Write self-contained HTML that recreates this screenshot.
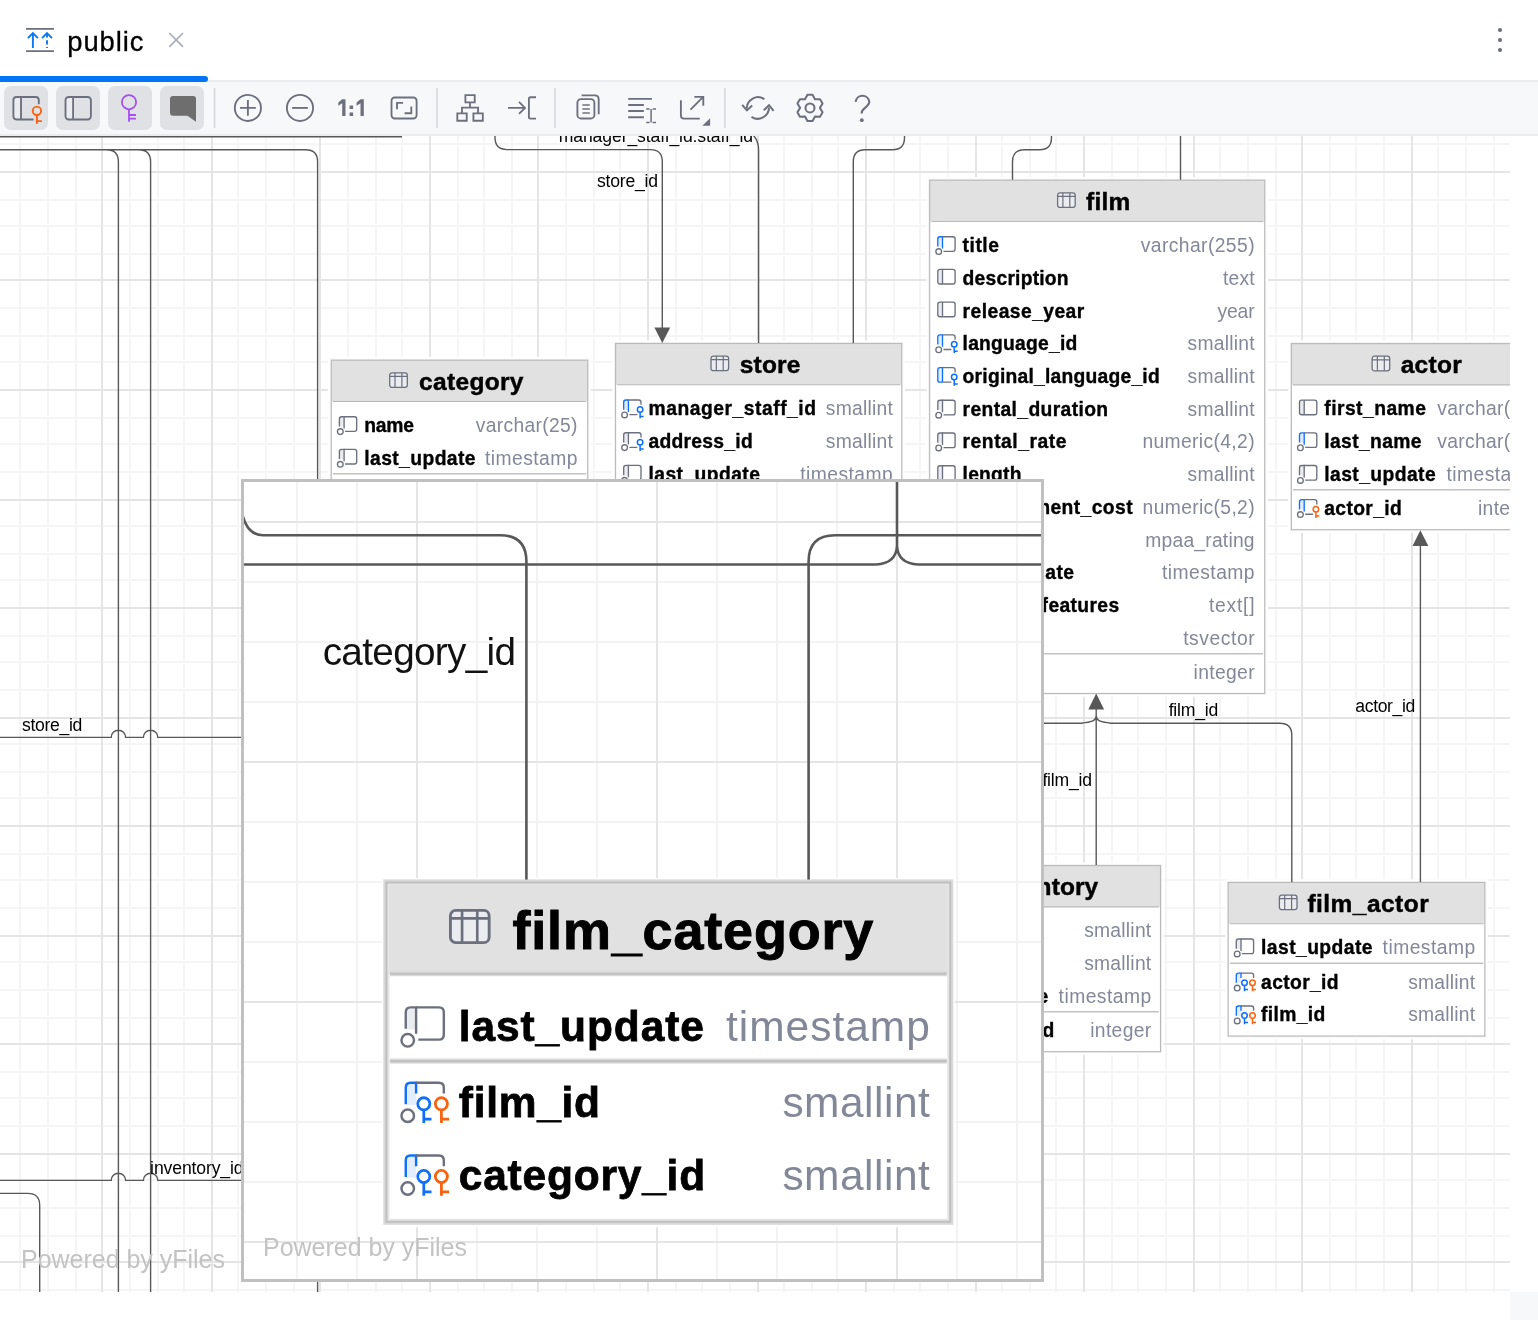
<!DOCTYPE html><html><head><meta charset="utf-8"><title>public</title>
<style>html,body{margin:0;padding:0;background:#fff}body{width:1538px;height:1320px;overflow:hidden;position:relative}svg{position:absolute;left:0;top:0;will-change:transform;font-family:"Liberation Sans",sans-serif}text{white-space:pre}</style></head><body>
<svg width="1538" height="1320" viewBox="0 0 1538 1320">
<defs><clipPath id="cv"><rect x="0" y="136" width="1510" height="1156"/></clipPath><clipPath id="mg"><rect x="244" y="482" width="797" height="797"/></clipPath></defs>
<rect width="1538" height="1320" fill="#fff"/>
<g clip-path="url(#cv)"><path d="M20 136V1292M48 136V1292M76 136V1292M130 136V1292M158 136V1292M184 136V1292M238 136V1292M266 136V1292M294 136V1292M348 136V1292M376 136V1292M402 136V1292M458 136V1292M484 136V1292M512 136V1292M566 136V1292M594 136V1292M620 136V1292M676 136V1292M702 136V1292M730 136V1292M784 136V1292M812 136V1292M838 136V1292M894 136V1292M920 136V1292M948 136V1292M1002 136V1292M1030 136V1292M1056 136V1292M1112 136V1292M1138 136V1292M1166 136V1292M1220 136V1292M1248 136V1292M1276 136V1292M1330 136V1292M1356 136V1292M1384 136V1292M1438 136V1292M1466 136V1292M1494 136V1292M0 144H1510M0 200H1510M0 226H1510M0 254H1510M0 308H1510M0 336H1510M0 362H1510M0 418H1510M0 444H1510M0 472H1510M0 526H1510M0 554H1510M0 580H1510M0 636H1510M0 662H1510M0 690H1510M0 744H1510M0 772H1510M0 798H1510M0 854H1510M0 880H1510M0 908H1510M0 962H1510M0 990H1510M0 1018H1510M0 1072H1510M0 1098H1510M0 1126H1510M0 1180H1510M0 1208H1510M0 1236H1510M0 1290H1510" stroke="#f5f5f5" stroke-width="2" fill="none" shape-rendering="crispEdges"/><path d="M102 136V1292M212 136V1292M320 136V1292M430 136V1292M538 136V1292M648 136V1292M758 136V1292M866 136V1292M976 136V1292M1084 136V1292M1194 136V1292M1302 136V1292M1412 136V1292M0 172H1510M0 280H1510M0 390H1510M0 500H1510M0 608H1510M0 718H1510M0 826H1510M0 936H1510M0 1044H1510M0 1154H1510M0 1262H1510" stroke="#e5e5e5" stroke-width="2" fill="none" shape-rendering="crispEdges"/><rect x="328.10" y="357.00" width="262.80" height="159.72" fill="#fff"/><rect x="612.40" y="340.30" width="292.50" height="192.44" fill="#fff"/><rect x="926.50" y="177.00" width="341.40" height="519.64" fill="#fff"/><rect x="1288.20" y="340.40" width="264.00" height="192.44" fill="#fff"/><rect x="1225.00" y="879.30" width="263.00" height="159.90" fill="#fff"/><rect x="900.80" y="862.40" width="262.90" height="192.44" fill="#fff"/><path d="M0 136.7H402M0 149.7H106.4Q118.4 149.7 118.4 161.7V1292M0 149.7H138.6Q150.6 149.7 150.6 161.7V1292M0 149.7H305.6Q317.6 149.7 317.6 161.7V1292M495 130V137.6Q495 149.6 507 149.6H650.3Q662.3 149.6 662.3 161.6V330M746 130Q758.6 136 758.6 150V344M904.5 130V137.7Q904.5 149.7 892.5 149.7H865.3Q853.3 149.7 853.3 161.7V344M1051.5 130V137.7Q1051.5 149.7 1039.5 149.7H1024.5Q1012.5 149.7 1012.5 161.7V181M1180.5 130V181M0 737.4H111.2A7.2 7.2 0 0 1 125.60000000000001 737.4H143.4A7.2 7.2 0 0 1 157.79999999999998 737.4H242M0 1180.4H111.2A7.2 7.2 0 0 1 125.60000000000001 1180.4H143.4A7.2 7.2 0 0 1 157.79999999999998 1180.4H242M0 1193.4H27.700000000000003Q39.7 1193.4 39.7 1205.4V1292M1096.2 708V866M1040 723.3H1082C1091 721.5 1096.2 721.4 1096.2 715.4M1096.2 715.4C1096.2 721.4 1101.4 721.5 1110.4 723.3H1279.8Q1291.8 723.3 1291.8 735.3V883M1420.4 545V883" stroke="#585858" stroke-width="1.4" fill="none"/><path d="M662.3 343L654.4 327.5H670.2Z" fill="#585858"/><path d="M1096.2 693.6L1088.3 709.4H1104.1Z" fill="#585858"/><path d="M1420.4 530.2L1412.5 546H1428.3Z" fill="#585858"/><text x="558.70" y="141.90" font-size="17.6" textLength="194.30">manager_staff_id:staff_id</text><text x="597.00" y="187.40" font-size="17.6" textLength="61.00">store_id</text><text x="22.00" y="730.70" font-size="17.6" textLength="60.30">store_id</text><text x="150.10" y="1173.60" font-size="17.6" textLength="93.50">inventory_id</text><text x="1168.70" y="716.30" font-size="17.6" textLength="49.60">film_id</text><text x="1355.30" y="712.00" font-size="17.6" textLength="60.10">actor_id</text><text x="1042.40" y="785.70" font-size="17.6" textLength="49.60">film_id</text><text x="21.00" y="1267.80" font-size="25" fill="#c3c3c3" textLength="203.90">Powered by yFiles</text><g transform="translate(331.30,360.20) scale(1)"><rect x="0" y="0" width="256.4" height="153.32" fill="#fff"/><rect x="0" y="0" width="256.4" height="41.3" fill="#e1e1e1"/><path d="M1.6 41.3H254.79999999999998" stroke="#b9b9b9" stroke-width="1.1"/><path d="M1.6 113.52H254.79999999999998" stroke="#c2c2c2" stroke-width="1.5"/><rect x="0" y="0" width="256.4" height="153.32" fill="none" stroke="#b9b9b9" stroke-width="1.1"/><rect x="-1" y="-1" width="258.4" height="155.32" fill="none" stroke="#000" stroke-opacity="0.05" stroke-width="1"/><g transform="translate(58.40,12.6)"><rect x="0" y="0" width="17.6" height="14.6" rx="2.4" fill="#ebecf0" stroke="#6c707e" stroke-width="1.3"/><path d="M0 3.6H17.6M5.3 0V14.6M12.2 0V14.6" stroke="#6c707e" stroke-width="1.2" fill="none"/></g><text x="87.80" y="29.90" font-size="24.5" font-weight="700" stroke="#000" stroke-width="0.44" textLength="104.30">category</text><g transform="translate(8.1,56.50)"><rect x="0.6" y="0.6" width="4.10" height="9.40" fill="#ebecf0"/><path d="M0 9.7V2.2Q0 0 2.2 0H4.7V11.899999999999999" stroke="#6c707e" stroke-width="1.35" fill="none"/><path d="M4.7 0H15.100000000000001Q17.3 0 17.3 2.2V12.399999999999999Q17.3 14.6 15.100000000000001 14.6H5.7" stroke="#6c707e" stroke-width="1.35" fill="none"/><circle cx="0.9" cy="14.9" r="2.85" fill="#fff" stroke="#6c707e" stroke-width="1.35"/></g><text x="32.90" y="71.90" font-size="19.3" font-weight="700" stroke="#000" stroke-width="0.35" textLength="49.70">name</text><text x="144.40" y="71.90" font-size="19.3" fill="#838899" textLength="101.80">varchar(25)</text><g transform="translate(8.1,89.22)"><rect x="0.6" y="0.6" width="4.10" height="9.40" fill="#ebecf0"/><path d="M0 9.7V2.2Q0 0 2.2 0H4.7V11.899999999999999" stroke="#6c707e" stroke-width="1.35" fill="none"/><path d="M4.7 0H15.100000000000001Q17.3 0 17.3 2.2V12.399999999999999Q17.3 14.6 15.100000000000001 14.6H5.7" stroke="#6c707e" stroke-width="1.35" fill="none"/><circle cx="0.9" cy="14.9" r="2.85" fill="#fff" stroke="#6c707e" stroke-width="1.35"/></g><text x="32.90" y="104.62" font-size="19.3" font-weight="700" stroke="#000" stroke-width="0.35" textLength="111.40">last_update</text><text x="153.60" y="104.62" font-size="19.3" fill="#838899" textLength="92.60">timestamp</text><g transform="translate(8.1,123.37)"><rect x="0.6" y="0.6" width="4.10" height="9.40" fill="#e3edfd"/><path d="M0 9.7V2.2Q0 0 2.2 0H4.7V11.899999999999999" stroke="#0f6ffc" stroke-width="1.35" fill="none"/><path d="M4.7 0H15.100000000000001Q17.3 0 17.3 2.2V4.8M5.7 14.6H13.6" stroke="#6c707e" stroke-width="1.35" fill="none"/><circle cx="0.9" cy="14.9" r="2.85" fill="#fff" stroke="#6c707e" stroke-width="1.35"/><circle cx="16.4" cy="9.5" r="2.75" fill="none" stroke="#f9620e" stroke-width="1.5"/><path d="M16.4 12.3V18.2M16.4 16.4H19.9" stroke="#f9620e" stroke-width="1.5" fill="none"/></g><text x="32.90" y="138.77" font-size="19.3" font-weight="700" stroke="#000" stroke-width="0.35" textLength="112.00">category_id</text><text x="185.20" y="138.77" font-size="19.3" fill="#838899" textLength="61.00">integer</text></g><g transform="translate(615.60,343.50) scale(1)"><rect x="0" y="0" width="286.1" height="186.04" fill="#fff"/><rect x="0" y="0" width="286.1" height="41.3" fill="#e1e1e1"/><path d="M1.6 41.3H284.5" stroke="#b9b9b9" stroke-width="1.1"/><path d="M1.6 146.24H284.5" stroke="#c2c2c2" stroke-width="1.5"/><rect x="0" y="0" width="286.1" height="186.04" fill="none" stroke="#b9b9b9" stroke-width="1.1"/><rect x="-1" y="-1" width="288.1" height="188.04" fill="none" stroke="#000" stroke-opacity="0.05" stroke-width="1"/><g transform="translate(95.40,12.6)"><rect x="0" y="0" width="17.6" height="14.6" rx="2.4" fill="#ebecf0" stroke="#6c707e" stroke-width="1.3"/><path d="M0 3.6H17.6M5.3 0V14.6M12.2 0V14.6" stroke="#6c707e" stroke-width="1.2" fill="none"/></g><text x="124.20" y="29.90" font-size="24.5" font-weight="700" stroke="#000" stroke-width="0.44" textLength="60.60">store</text><g transform="translate(8.1,56.50)"><rect x="0.6" y="0.6" width="4.10" height="9.40" fill="#e3edfd"/><path d="M0 9.7V2.2Q0 0 2.2 0H4.7V11.899999999999999" stroke="#0f6ffc" stroke-width="1.35" fill="none"/><path d="M4.7 0H15.100000000000001Q17.3 0 17.3 2.2V4.8M5.7 14.6H13.6" stroke="#6c707e" stroke-width="1.35" fill="none"/><circle cx="0.9" cy="14.9" r="2.85" fill="#fff" stroke="#6c707e" stroke-width="1.35"/><circle cx="16.4" cy="9.5" r="2.75" fill="none" stroke="#0f6ffc" stroke-width="1.5"/><path d="M16.4 12.3V18.2M16.4 16.4H19.9" stroke="#0f6ffc" stroke-width="1.5" fill="none"/></g><text x="32.90" y="71.90" font-size="19.3" font-weight="700" stroke="#000" stroke-width="0.35" textLength="167.50">manager_staff_id</text><text x="210.20" y="71.90" font-size="19.3" fill="#838899" textLength="67.00">smallint</text><g transform="translate(8.1,89.22)"><rect x="0.6" y="0.6" width="4.10" height="9.40" fill="#ebecf0"/><path d="M0 9.7V2.2Q0 0 2.2 0H4.7V11.899999999999999" stroke="#6c707e" stroke-width="1.35" fill="none"/><path d="M4.7 0H15.100000000000001Q17.3 0 17.3 2.2V4.8M5.7 14.6H13.6" stroke="#6c707e" stroke-width="1.35" fill="none"/><circle cx="0.9" cy="14.9" r="2.85" fill="#fff" stroke="#6c707e" stroke-width="1.35"/><circle cx="16.4" cy="9.5" r="2.75" fill="none" stroke="#0f6ffc" stroke-width="1.5"/><path d="M16.4 12.3V18.2M16.4 16.4H19.9" stroke="#0f6ffc" stroke-width="1.5" fill="none"/></g><text x="32.90" y="104.62" font-size="19.3" font-weight="700" stroke="#000" stroke-width="0.35" textLength="104.20">address_id</text><text x="210.20" y="104.62" font-size="19.3" fill="#838899" textLength="67.00">smallint</text><g transform="translate(8.1,121.94)"><rect x="0.6" y="0.6" width="4.10" height="9.40" fill="#ebecf0"/><path d="M0 9.7V2.2Q0 0 2.2 0H4.7V11.899999999999999" stroke="#6c707e" stroke-width="1.35" fill="none"/><path d="M4.7 0H15.100000000000001Q17.3 0 17.3 2.2V12.399999999999999Q17.3 14.6 15.100000000000001 14.6H5.7" stroke="#6c707e" stroke-width="1.35" fill="none"/><circle cx="0.9" cy="14.9" r="2.85" fill="#fff" stroke="#6c707e" stroke-width="1.35"/></g><text x="32.90" y="137.34" font-size="19.3" font-weight="700" stroke="#000" stroke-width="0.35" textLength="111.40">last_update</text><text x="184.60" y="137.34" font-size="19.3" fill="#838899" textLength="92.60">timestamp</text><g transform="translate(8.1,156.09)"><rect x="0.6" y="0.6" width="4.10" height="9.40" fill="#e3edfd"/><path d="M0 9.7V2.2Q0 0 2.2 0H4.7V11.899999999999999" stroke="#0f6ffc" stroke-width="1.35" fill="none"/><path d="M4.7 0H15.100000000000001Q17.3 0 17.3 2.2V4.8M5.7 14.6H13.6" stroke="#6c707e" stroke-width="1.35" fill="none"/><circle cx="0.9" cy="14.9" r="2.85" fill="#fff" stroke="#6c707e" stroke-width="1.35"/><circle cx="16.4" cy="9.5" r="2.75" fill="none" stroke="#f9620e" stroke-width="1.5"/><path d="M16.4 12.3V18.2M16.4 16.4H19.9" stroke="#f9620e" stroke-width="1.5" fill="none"/></g><text x="32.90" y="171.49" font-size="19.3" font-weight="700" stroke="#000" stroke-width="0.35" textLength="76.00">store_id</text><text x="216.20" y="171.49" font-size="19.3" fill="#838899" textLength="61.00">integer</text></g><g transform="translate(929.70,180.20) scale(1)"><rect x="0" y="0" width="335.0" height="513.24" fill="#fff"/><rect x="0" y="0" width="335.0" height="41.3" fill="#e1e1e1"/><path d="M1.6 41.3H333.4" stroke="#b9b9b9" stroke-width="1.1"/><path d="M1.6 473.44H333.4" stroke="#c2c2c2" stroke-width="1.5"/><rect x="0" y="0" width="335.0" height="513.24" fill="none" stroke="#b9b9b9" stroke-width="1.1"/><rect x="-1" y="-1" width="337.0" height="515.24" fill="none" stroke="#000" stroke-opacity="0.05" stroke-width="1"/><g transform="translate(127.90,12.6)"><rect x="0" y="0" width="17.6" height="14.6" rx="2.4" fill="#ebecf0" stroke="#6c707e" stroke-width="1.3"/><path d="M0 3.6H17.6M5.3 0V14.6M12.2 0V14.6" stroke="#6c707e" stroke-width="1.2" fill="none"/></g><text x="156.30" y="29.90" font-size="24.5" font-weight="700" stroke="#000" stroke-width="0.44" textLength="44.40">film</text><g transform="translate(8.1,56.50)"><rect x="0.6" y="0.6" width="4.10" height="9.40" fill="#e3edfd"/><path d="M0 9.7V2.2Q0 0 2.2 0H4.7V11.899999999999999" stroke="#0f6ffc" stroke-width="1.35" fill="none"/><path d="M4.7 0H15.100000000000001Q17.3 0 17.3 2.2V12.399999999999999Q17.3 14.6 15.100000000000001 14.6H5.7" stroke="#6c707e" stroke-width="1.35" fill="none"/><circle cx="0.9" cy="14.9" r="2.85" fill="#fff" stroke="#6c707e" stroke-width="1.35"/></g><text x="32.90" y="71.90" font-size="19.3" font-weight="700" stroke="#000" stroke-width="0.35" textLength="36.40">title</text><text x="211.00" y="71.90" font-size="19.3" fill="#838899" textLength="113.90">varchar(255)</text><g transform="translate(8.1,89.22)"><rect x="0.6" y="0.6" width="4.10" height="13.40" fill="#ebecf0"/><rect x="0" y="0" width="17.3" height="14.6" rx="2.2" fill="none" stroke="#6c707e" stroke-width="1.35"/><path d="M4.7 0V14.6" stroke="#6c707e" stroke-width="1.35" fill="none"/></g><text x="32.90" y="104.62" font-size="19.3" font-weight="700" stroke="#000" stroke-width="0.35" textLength="106.00">description</text><text x="293.40" y="104.62" font-size="19.3" fill="#838899" textLength="31.50">text</text><g transform="translate(8.1,121.94)"><rect x="0.6" y="0.6" width="4.10" height="13.40" fill="#ebecf0"/><rect x="0" y="0" width="17.3" height="14.6" rx="2.2" fill="none" stroke="#6c707e" stroke-width="1.35"/><path d="M4.7 0V14.6" stroke="#6c707e" stroke-width="1.35" fill="none"/></g><text x="32.90" y="137.34" font-size="19.3" font-weight="700" stroke="#000" stroke-width="0.35" textLength="121.70">release_year</text><text x="287.90" y="137.34" font-size="19.3" fill="#838899" textLength="37.00">year</text><g transform="translate(8.1,154.66)"><rect x="0.6" y="0.6" width="4.10" height="9.40" fill="#e3edfd"/><path d="M0 9.7V2.2Q0 0 2.2 0H4.7V11.899999999999999" stroke="#0f6ffc" stroke-width="1.35" fill="none"/><path d="M4.7 0H15.100000000000001Q17.3 0 17.3 2.2V4.8M5.7 14.6H13.6" stroke="#6c707e" stroke-width="1.35" fill="none"/><circle cx="0.9" cy="14.9" r="2.85" fill="#fff" stroke="#6c707e" stroke-width="1.35"/><circle cx="16.4" cy="9.5" r="2.75" fill="none" stroke="#0f6ffc" stroke-width="1.5"/><path d="M16.4 12.3V18.2M16.4 16.4H19.9" stroke="#0f6ffc" stroke-width="1.5" fill="none"/></g><text x="32.90" y="170.06" font-size="19.3" font-weight="700" stroke="#000" stroke-width="0.35" textLength="114.70">language_id</text><text x="257.90" y="170.06" font-size="19.3" fill="#838899" textLength="67.00">smallint</text><g transform="translate(8.1,187.38)"><rect x="0.6" y="0.6" width="4.10" height="13.40" fill="#e3edfd"/><path d="M4.7 14.6H2.2Q0 14.6 0 12.399999999999999V2.2Q0 0 2.2 0H4.7V14.6" stroke="#0f6ffc" stroke-width="1.35" fill="none"/><path d="M4.7 0H15.100000000000001Q17.3 0 17.3 2.2V4.8M4.7 14.6H13.6" stroke="#6c707e" stroke-width="1.35" fill="none"/><circle cx="16.4" cy="9.5" r="2.75" fill="none" stroke="#0f6ffc" stroke-width="1.5"/><path d="M16.4 12.3V18.2M16.4 16.4H19.9" stroke="#0f6ffc" stroke-width="1.5" fill="none"/></g><text x="32.90" y="202.78" font-size="19.3" font-weight="700" stroke="#000" stroke-width="0.35" textLength="197.10">original_language_id</text><text x="257.90" y="202.78" font-size="19.3" fill="#838899" textLength="67.00">smallint</text><g transform="translate(8.1,220.10)"><rect x="0.6" y="0.6" width="4.10" height="9.40" fill="#ebecf0"/><path d="M0 9.7V2.2Q0 0 2.2 0H4.7V11.899999999999999" stroke="#6c707e" stroke-width="1.35" fill="none"/><path d="M4.7 0H15.100000000000001Q17.3 0 17.3 2.2V12.399999999999999Q17.3 14.6 15.100000000000001 14.6H5.7" stroke="#6c707e" stroke-width="1.35" fill="none"/><circle cx="0.9" cy="14.9" r="2.85" fill="#fff" stroke="#6c707e" stroke-width="1.35"/></g><text x="32.90" y="235.50" font-size="19.3" font-weight="700" stroke="#000" stroke-width="0.35" textLength="145.50">rental_duration</text><text x="257.90" y="235.50" font-size="19.3" fill="#838899" textLength="67.00">smallint</text><g transform="translate(8.1,252.82)"><rect x="0.6" y="0.6" width="4.10" height="9.40" fill="#ebecf0"/><path d="M0 9.7V2.2Q0 0 2.2 0H4.7V11.899999999999999" stroke="#6c707e" stroke-width="1.35" fill="none"/><path d="M4.7 0H15.100000000000001Q17.3 0 17.3 2.2V12.399999999999999Q17.3 14.6 15.100000000000001 14.6H5.7" stroke="#6c707e" stroke-width="1.35" fill="none"/><circle cx="0.9" cy="14.9" r="2.85" fill="#fff" stroke="#6c707e" stroke-width="1.35"/></g><text x="32.90" y="268.22" font-size="19.3" font-weight="700" stroke="#000" stroke-width="0.35" textLength="103.80">rental_rate</text><text x="212.70" y="268.22" font-size="19.3" fill="#838899" textLength="112.20">numeric(4,2)</text><g transform="translate(8.1,285.54)"><rect x="0.6" y="0.6" width="4.10" height="13.40" fill="#ebecf0"/><rect x="0" y="0" width="17.3" height="14.6" rx="2.2" fill="none" stroke="#6c707e" stroke-width="1.35"/><path d="M4.7 0V14.6" stroke="#6c707e" stroke-width="1.35" fill="none"/></g><text x="32.90" y="300.94" font-size="19.3" font-weight="700" stroke="#000" stroke-width="0.35" textLength="58.90">length</text><text x="257.90" y="300.94" font-size="19.3" fill="#838899" textLength="67.00">smallint</text><g transform="translate(8.1,318.26)"><rect x="0.6" y="0.6" width="4.10" height="9.40" fill="#ebecf0"/><path d="M0 9.7V2.2Q0 0 2.2 0H4.7V11.899999999999999" stroke="#6c707e" stroke-width="1.35" fill="none"/><path d="M4.7 0H15.100000000000001Q17.3 0 17.3 2.2V12.399999999999999Q17.3 14.6 15.100000000000001 14.6H5.7" stroke="#6c707e" stroke-width="1.35" fill="none"/><circle cx="0.9" cy="14.9" r="2.85" fill="#fff" stroke="#6c707e" stroke-width="1.35"/></g><text x="32.90" y="333.66" font-size="19.3" font-weight="700" stroke="#000" stroke-width="0.35" textLength="170.00">replacement_cost</text><text x="212.90" y="333.66" font-size="19.3" fill="#838899" textLength="112.00">numeric(5,2)</text><g transform="translate(8.1,350.98)"><rect x="0.6" y="0.6" width="4.10" height="13.40" fill="#ebecf0"/><rect x="0" y="0" width="17.3" height="14.6" rx="2.2" fill="none" stroke="#6c707e" stroke-width="1.35"/><path d="M4.7 0V14.6" stroke="#6c707e" stroke-width="1.35" fill="none"/></g><text x="32.90" y="366.38" font-size="19.3" font-weight="700" stroke="#000" stroke-width="0.35" textLength="56.00">rating</text><text x="215.60" y="366.38" font-size="19.3" fill="#838899" textLength="109.30">mpaa_rating</text><g transform="translate(8.1,383.70)"><rect x="0.6" y="0.6" width="4.10" height="9.40" fill="#ebecf0"/><path d="M0 9.7V2.2Q0 0 2.2 0H4.7V11.899999999999999" stroke="#6c707e" stroke-width="1.35" fill="none"/><path d="M4.7 0H15.100000000000001Q17.3 0 17.3 2.2V12.399999999999999Q17.3 14.6 15.100000000000001 14.6H5.7" stroke="#6c707e" stroke-width="1.35" fill="none"/><circle cx="0.9" cy="14.9" r="2.85" fill="#fff" stroke="#6c707e" stroke-width="1.35"/></g><text x="32.90" y="399.10" font-size="19.3" font-weight="700" stroke="#000" stroke-width="0.35" textLength="111.40">last_update</text><text x="232.30" y="399.10" font-size="19.3" fill="#838899" textLength="92.60">timestamp</text><g transform="translate(8.1,416.42)"><rect x="0.6" y="0.6" width="4.10" height="13.40" fill="#ebecf0"/><rect x="0" y="0" width="17.3" height="14.6" rx="2.2" fill="none" stroke="#6c707e" stroke-width="1.35"/><path d="M4.7 0V14.6" stroke="#6c707e" stroke-width="1.35" fill="none"/></g><text x="32.90" y="431.82" font-size="19.3" font-weight="700" stroke="#000" stroke-width="0.35" textLength="156.60">special_features</text><text x="279.20" y="431.82" font-size="19.3" fill="#838899" textLength="45.70">text[]</text><g transform="translate(8.1,449.14)"><rect x="0.6" y="0.6" width="4.10" height="9.40" fill="#e3edfd"/><path d="M0 9.7V2.2Q0 0 2.2 0H4.7V11.899999999999999" stroke="#0f6ffc" stroke-width="1.35" fill="none"/><path d="M4.7 0H15.100000000000001Q17.3 0 17.3 2.2V12.399999999999999Q17.3 14.6 15.100000000000001 14.6H5.7" stroke="#6c707e" stroke-width="1.35" fill="none"/><circle cx="0.9" cy="14.9" r="2.85" fill="#fff" stroke="#6c707e" stroke-width="1.35"/></g><text x="32.90" y="464.54" font-size="19.3" font-weight="700" stroke="#000" stroke-width="0.35" textLength="68.00">fulltext</text><text x="253.50" y="464.54" font-size="19.3" fill="#838899" textLength="71.40">tsvector</text><g transform="translate(8.1,483.29)"><rect x="0.6" y="0.6" width="4.10" height="9.40" fill="#e3edfd"/><path d="M0 9.7V2.2Q0 0 2.2 0H4.7V11.899999999999999" stroke="#0f6ffc" stroke-width="1.35" fill="none"/><path d="M4.7 0H15.100000000000001Q17.3 0 17.3 2.2V4.8M5.7 14.6H13.6" stroke="#6c707e" stroke-width="1.35" fill="none"/><circle cx="0.9" cy="14.9" r="2.85" fill="#fff" stroke="#6c707e" stroke-width="1.35"/><circle cx="16.4" cy="9.5" r="2.75" fill="none" stroke="#f9620e" stroke-width="1.5"/><path d="M16.4 12.3V18.2M16.4 16.4H19.9" stroke="#f9620e" stroke-width="1.5" fill="none"/></g><text x="32.90" y="498.69" font-size="19.3" font-weight="700" stroke="#000" stroke-width="0.35" textLength="64.20">film_id</text><text x="263.90" y="498.69" font-size="19.3" fill="#838899" textLength="61.00">integer</text></g><g transform="translate(1291.40,343.60) scale(1)"><rect x="0" y="0" width="257.6" height="186.04" fill="#fff"/><rect x="0" y="0" width="257.6" height="41.3" fill="#e1e1e1"/><path d="M1.6 41.3H256.0" stroke="#b9b9b9" stroke-width="1.1"/><path d="M1.6 146.24H256.0" stroke="#c2c2c2" stroke-width="1.5"/><rect x="0" y="0" width="257.6" height="186.04" fill="none" stroke="#b9b9b9" stroke-width="1.1"/><rect x="-1" y="-1" width="259.6" height="188.04" fill="none" stroke="#000" stroke-opacity="0.05" stroke-width="1"/><g transform="translate(80.70,12.6)"><rect x="0" y="0" width="17.6" height="14.6" rx="2.4" fill="#ebecf0" stroke="#6c707e" stroke-width="1.3"/><path d="M0 3.6H17.6M5.3 0V14.6M12.2 0V14.6" stroke="#6c707e" stroke-width="1.2" fill="none"/></g><text x="109.30" y="29.90" font-size="24.5" font-weight="700" stroke="#000" stroke-width="0.44" textLength="61.00">actor</text><g transform="translate(8.1,56.50)"><rect x="0.6" y="0.6" width="4.10" height="13.40" fill="#ebecf0"/><rect x="0" y="0" width="17.3" height="14.6" rx="2.2" fill="none" stroke="#6c707e" stroke-width="1.35"/><path d="M4.7 0V14.6" stroke="#6c707e" stroke-width="1.35" fill="none"/></g><text x="32.90" y="71.90" font-size="19.3" font-weight="700" stroke="#000" stroke-width="0.35" textLength="101.60">first_name</text><text x="145.80" y="71.90" font-size="19.3" fill="#838899" textLength="101.80">varchar(45)</text><g transform="translate(8.1,89.22)"><rect x="0.6" y="0.6" width="4.10" height="9.40" fill="#e3edfd"/><path d="M0 9.7V2.2Q0 0 2.2 0H4.7V11.899999999999999" stroke="#0f6ffc" stroke-width="1.35" fill="none"/><path d="M4.7 0H15.100000000000001Q17.3 0 17.3 2.2V12.399999999999999Q17.3 14.6 15.100000000000001 14.6H5.7" stroke="#6c707e" stroke-width="1.35" fill="none"/><circle cx="0.9" cy="14.9" r="2.85" fill="#fff" stroke="#6c707e" stroke-width="1.35"/></g><text x="32.90" y="104.62" font-size="19.3" font-weight="700" stroke="#000" stroke-width="0.35" textLength="97.20">last_name</text><text x="145.80" y="104.62" font-size="19.3" fill="#838899" textLength="101.80">varchar(45)</text><g transform="translate(8.1,121.94)"><rect x="0.6" y="0.6" width="4.10" height="9.40" fill="#ebecf0"/><path d="M0 9.7V2.2Q0 0 2.2 0H4.7V11.899999999999999" stroke="#6c707e" stroke-width="1.35" fill="none"/><path d="M4.7 0H15.100000000000001Q17.3 0 17.3 2.2V12.399999999999999Q17.3 14.6 15.100000000000001 14.6H5.7" stroke="#6c707e" stroke-width="1.35" fill="none"/><circle cx="0.9" cy="14.9" r="2.85" fill="#fff" stroke="#6c707e" stroke-width="1.35"/></g><text x="32.90" y="137.34" font-size="19.3" font-weight="700" stroke="#000" stroke-width="0.35" textLength="111.40">last_update</text><text x="155.00" y="137.34" font-size="19.3" fill="#838899" textLength="92.60">timestamp</text><g transform="translate(8.1,156.09)"><rect x="0.6" y="0.6" width="4.10" height="9.40" fill="#e3edfd"/><path d="M0 9.7V2.2Q0 0 2.2 0H4.7V11.899999999999999" stroke="#0f6ffc" stroke-width="1.35" fill="none"/><path d="M4.7 0H15.100000000000001Q17.3 0 17.3 2.2V4.8M5.7 14.6H13.6" stroke="#6c707e" stroke-width="1.35" fill="none"/><circle cx="0.9" cy="14.9" r="2.85" fill="#fff" stroke="#6c707e" stroke-width="1.35"/><circle cx="16.4" cy="9.5" r="2.75" fill="none" stroke="#f9620e" stroke-width="1.5"/><path d="M16.4 12.3V18.2M16.4 16.4H19.9" stroke="#f9620e" stroke-width="1.5" fill="none"/></g><text x="32.90" y="171.49" font-size="19.3" font-weight="700" stroke="#000" stroke-width="0.35" textLength="77.50">actor_id</text><text x="186.60" y="171.49" font-size="19.3" fill="#838899" textLength="61.00">integer</text></g><g transform="translate(1228.20,882.50) scale(1)"><rect x="0" y="0" width="256.6" height="153.50" fill="#fff"/><rect x="0" y="0" width="256.6" height="41.3" fill="#e1e1e1"/><path d="M1.6 41.3H255.00000000000003" stroke="#b9b9b9" stroke-width="1.1"/><path d="M1.6 80.80H255.00000000000003" stroke="#c2c2c2" stroke-width="1.5"/><rect x="0" y="0" width="256.6" height="153.50" fill="none" stroke="#b9b9b9" stroke-width="1.1"/><rect x="-1" y="-1" width="258.6" height="155.50" fill="none" stroke="#000" stroke-opacity="0.05" stroke-width="1"/><g transform="translate(51.20,12.6)"><rect x="0" y="0" width="17.6" height="14.6" rx="2.4" fill="#ebecf0" stroke="#6c707e" stroke-width="1.3"/><path d="M0 3.6H17.6M5.3 0V14.6M12.2 0V14.6" stroke="#6c707e" stroke-width="1.2" fill="none"/></g><text x="79.30" y="29.90" font-size="24.5" font-weight="700" stroke="#000" stroke-width="0.44" textLength="121.20">film_actor</text><g transform="translate(8.1,56.50)"><rect x="0.6" y="0.6" width="4.10" height="9.40" fill="#ebecf0"/><path d="M0 9.7V2.2Q0 0 2.2 0H4.7V11.899999999999999" stroke="#6c707e" stroke-width="1.35" fill="none"/><path d="M4.7 0H15.100000000000001Q17.3 0 17.3 2.2V12.399999999999999Q17.3 14.6 15.100000000000001 14.6H5.7" stroke="#6c707e" stroke-width="1.35" fill="none"/><circle cx="0.9" cy="14.9" r="2.85" fill="#fff" stroke="#6c707e" stroke-width="1.35"/></g><text x="32.90" y="71.90" font-size="19.3" font-weight="700" stroke="#000" stroke-width="0.35" textLength="111.40">last_update</text><text x="154.40" y="71.90" font-size="19.3" fill="#838899" textLength="92.60">timestamp</text><g transform="translate(8.1,90.65)"><rect x="0.6" y="0.6" width="4.10" height="9.40" fill="#e3edfd"/><path d="M0 9.7V2.2Q0 0 2.2 0H4.7V4.8" stroke="#0f6ffc" stroke-width="1.35" fill="none"/><path d="M4.7 0H15.100000000000001Q17.3 0 17.3 2.2V4.8" stroke="#6c707e" stroke-width="1.35" fill="none"/><circle cx="0.9" cy="14.9" r="2.85" fill="#fff" stroke="#6c707e" stroke-width="1.35"/><circle cx="8.2" cy="9.5" r="2.75" fill="none" stroke="#0f6ffc" stroke-width="1.5"/><path d="M8.2 12.3V18.2M8.2 16.4H11.7" stroke="#0f6ffc" stroke-width="1.5" fill="none"/><circle cx="16.2" cy="9.5" r="2.75" fill="none" stroke="#f9620e" stroke-width="1.5"/><path d="M16.2 12.3V18.2M16.2 16.4H19.7" stroke="#f9620e" stroke-width="1.5" fill="none"/></g><text x="32.90" y="106.05" font-size="19.3" font-weight="700" stroke="#000" stroke-width="0.35" textLength="77.50">actor_id</text><text x="180.00" y="106.05" font-size="19.3" fill="#838899" textLength="67.00">smallint</text><g transform="translate(8.1,123.55)"><rect x="0.6" y="0.6" width="4.10" height="9.40" fill="#e3edfd"/><path d="M0 9.7V2.2Q0 0 2.2 0H4.7V4.8" stroke="#0f6ffc" stroke-width="1.35" fill="none"/><path d="M4.7 0H15.100000000000001Q17.3 0 17.3 2.2V4.8" stroke="#6c707e" stroke-width="1.35" fill="none"/><circle cx="0.9" cy="14.9" r="2.85" fill="#fff" stroke="#6c707e" stroke-width="1.35"/><circle cx="8.2" cy="9.5" r="2.75" fill="none" stroke="#0f6ffc" stroke-width="1.5"/><path d="M8.2 12.3V18.2M8.2 16.4H11.7" stroke="#0f6ffc" stroke-width="1.5" fill="none"/><circle cx="16.2" cy="9.5" r="2.75" fill="none" stroke="#f9620e" stroke-width="1.5"/><path d="M16.2 12.3V18.2M16.2 16.4H19.7" stroke="#f9620e" stroke-width="1.5" fill="none"/></g><text x="32.90" y="138.95" font-size="19.3" font-weight="700" stroke="#000" stroke-width="0.35" textLength="64.20">film_id</text><text x="180.00" y="138.95" font-size="19.3" fill="#838899" textLength="67.00">smallint</text></g><g transform="translate(904.00,865.60) scale(1)"><rect x="0" y="0" width="256.5" height="186.04" fill="#fff"/><rect x="0" y="0" width="256.5" height="41.3" fill="#e1e1e1"/><path d="M1.6 41.3H254.9" stroke="#b9b9b9" stroke-width="1.1"/><path d="M1.6 146.24H254.9" stroke="#c2c2c2" stroke-width="1.5"/><rect x="0" y="0" width="256.5" height="186.04" fill="none" stroke="#b9b9b9" stroke-width="1.1"/><rect x="-1" y="-1" width="258.5" height="188.04" fill="none" stroke="#000" stroke-opacity="0.05" stroke-width="1"/><g transform="translate(54.50,12.6)"><rect x="0" y="0" width="17.6" height="14.6" rx="2.4" fill="#ebecf0" stroke="#6c707e" stroke-width="1.3"/><path d="M0 3.6H17.6M5.3 0V14.6M12.2 0V14.6" stroke="#6c707e" stroke-width="1.2" fill="none"/></g><text x="83.20" y="29.90" font-size="24.5" font-weight="700" stroke="#000" stroke-width="0.44" textLength="111.00">inventory</text><g transform="translate(8.1,56.50)"><rect x="0.6" y="0.6" width="4.10" height="9.40" fill="#e3edfd"/><path d="M0 9.7V2.2Q0 0 2.2 0H4.7V11.899999999999999" stroke="#0f6ffc" stroke-width="1.35" fill="none"/><path d="M4.7 0H15.100000000000001Q17.3 0 17.3 2.2V4.8M5.7 14.6H13.6" stroke="#6c707e" stroke-width="1.35" fill="none"/><circle cx="0.9" cy="14.9" r="2.85" fill="#fff" stroke="#6c707e" stroke-width="1.35"/><circle cx="16.4" cy="9.5" r="2.75" fill="none" stroke="#0f6ffc" stroke-width="1.5"/><path d="M16.4 12.3V18.2M16.4 16.4H19.9" stroke="#0f6ffc" stroke-width="1.5" fill="none"/></g><text x="32.90" y="71.90" font-size="19.3" font-weight="700" stroke="#000" stroke-width="0.35" textLength="64.20">film_id</text><text x="180.20" y="71.90" font-size="19.3" fill="#838899" textLength="67.00">smallint</text><g transform="translate(8.1,89.22)"><rect x="0.6" y="0.6" width="4.10" height="9.40" fill="#ebecf0"/><path d="M0 9.7V2.2Q0 0 2.2 0H4.7V11.899999999999999" stroke="#6c707e" stroke-width="1.35" fill="none"/><path d="M4.7 0H15.100000000000001Q17.3 0 17.3 2.2V4.8M5.7 14.6H13.6" stroke="#6c707e" stroke-width="1.35" fill="none"/><circle cx="0.9" cy="14.9" r="2.85" fill="#fff" stroke="#6c707e" stroke-width="1.35"/><circle cx="16.4" cy="9.5" r="2.75" fill="none" stroke="#0f6ffc" stroke-width="1.5"/><path d="M16.4 12.3V18.2M16.4 16.4H19.9" stroke="#0f6ffc" stroke-width="1.5" fill="none"/></g><text x="32.90" y="104.62" font-size="19.3" font-weight="700" stroke="#000" stroke-width="0.35" textLength="76.00">store_id</text><text x="180.20" y="104.62" font-size="19.3" fill="#838899" textLength="67.00">smallint</text><g transform="translate(8.1,121.94)"><rect x="0.6" y="0.6" width="4.10" height="9.40" fill="#ebecf0"/><path d="M0 9.7V2.2Q0 0 2.2 0H4.7V11.899999999999999" stroke="#6c707e" stroke-width="1.35" fill="none"/><path d="M4.7 0H15.100000000000001Q17.3 0 17.3 2.2V12.399999999999999Q17.3 14.6 15.100000000000001 14.6H5.7" stroke="#6c707e" stroke-width="1.35" fill="none"/><circle cx="0.9" cy="14.9" r="2.85" fill="#fff" stroke="#6c707e" stroke-width="1.35"/></g><text x="32.90" y="137.34" font-size="19.3" font-weight="700" stroke="#000" stroke-width="0.35" textLength="111.40">last_update</text><text x="154.60" y="137.34" font-size="19.3" fill="#838899" textLength="92.60">timestamp</text><g transform="translate(8.1,156.09)"><rect x="0.6" y="0.6" width="4.10" height="9.40" fill="#e3edfd"/><path d="M0 9.7V2.2Q0 0 2.2 0H4.7V11.899999999999999" stroke="#0f6ffc" stroke-width="1.35" fill="none"/><path d="M4.7 0H15.100000000000001Q17.3 0 17.3 2.2V4.8M5.7 14.6H13.6" stroke="#6c707e" stroke-width="1.35" fill="none"/><circle cx="0.9" cy="14.9" r="2.85" fill="#fff" stroke="#6c707e" stroke-width="1.35"/><circle cx="16.4" cy="9.5" r="2.75" fill="none" stroke="#f9620e" stroke-width="1.5"/><path d="M16.4 12.3V18.2M16.4 16.4H19.9" stroke="#f9620e" stroke-width="1.5" fill="none"/></g><text x="32.90" y="171.49" font-size="19.3" font-weight="700" stroke="#000" stroke-width="0.35" textLength="117.40">inventory_id</text><text x="186.20" y="171.49" font-size="19.3" fill="#838899" textLength="61.00">integer</text></g><rect x="241" y="479" width="803" height="803" fill="#c0c0c0"/><rect x="244" y="482" width="797" height="797" fill="#fff"/><g clip-path="url(#mg)"><path d="M297 482V1279M357 482V1279M477 482V1279M537 482V1279M597 482V1279M717 482V1279M777 482V1279M837 482V1279M957 482V1279M1017 482V1279M244 582H1041M244 642H1041M244 702H1041M244 822H1041M244 882H1041M244 942H1041M244 1062H1041M244 1122H1041M244 1182H1041" stroke="#f3f3f3" stroke-width="2" fill="none" shape-rendering="crispEdges"/><path d="M417 482V1279M657 482V1279M897 482V1279M244 522H1041M244 762H1041M244 1002H1041M244 1242H1041" stroke="#e5e5e5" stroke-width="2" fill="none" shape-rendering="crispEdges"/><rect x="382" y="878" width="572.6" height="349" fill="#fff"/><path d="M240 500Q243 535.2 263 535.2H500Q526.4 535.2 526.4 561.6V884M240 564.5H876Q896 563.5 897 546V478M897 546Q898 563.5 918 564.5H1045M1045 535.2H835Q808.6 535.2 808.6 561.6V884" stroke="#585858" stroke-width="2.6" fill="none"/><text x="322.70" y="664.70" font-size="38.7" fill="#111" textLength="193.30">category_id</text><text x="263.00" y="1256.00" font-size="25" fill="#c3c3c3" textLength="203.90">Powered by yFiles</text><g transform="translate(386.40,882.50) scale(2.2,2.21)"><rect x="0" y="0" width="256.3" height="153.50" fill="#fff"/><rect x="0" y="0" width="256.3" height="41.3" fill="#e1e1e1"/><path d="M1.6 41.3H254.70000000000002" stroke="#bfbfbf" stroke-width="0.9"/><path d="M1.6 80.80H254.70000000000002" stroke="#c0c0c0" stroke-width="1.5"/><rect x="0" y="0" width="256.3" height="153.50" fill="none" stroke="#e4e4e4" stroke-width="2.7"/><path d="M1.6 41.3H254.70000000000002" stroke="#d9d9d9" stroke-width="2.2"/><path d="M1.6 41.3H254.70000000000002" stroke="#bfbfbf" stroke-width="0.9"/><path d="M1.6 80.80H254.70000000000002" stroke="#e6e6e6" stroke-width="2.6"/><path d="M1.6 80.80H254.70000000000002" stroke="#c0c0c0" stroke-width="1.2"/><rect x="0" y="0" width="256.3" height="153.50" fill="none" stroke="#bfbfbf" stroke-width="0.9"/><rect x="-1" y="-1" width="258.3" height="155.50" fill="none" stroke="#000" stroke-opacity="0.05" stroke-width="1"/><g transform="translate(29.10,12.6)"><rect x="0" y="0" width="17.6" height="14.6" rx="2.4" fill="#ebecf0" stroke="#6c707e" stroke-width="1.3"/><path d="M0 3.6H17.6M5.3 0V14.6M12.2 0V14.6" stroke="#6c707e" stroke-width="1.2" fill="none"/></g><text x="57.30" y="29.90" font-size="24.5" font-weight="700" stroke="#000" stroke-width="0.44" textLength="164.00">film_category</text><g transform="translate(8.8,56.50)"><rect x="0.6" y="0.6" width="4.10" height="9.40" fill="#ebecf0"/><path d="M0 9.7V2.2Q0 0 2.2 0H4.7V11.899999999999999" stroke="#6c707e" stroke-width="1.1" fill="none"/><path d="M4.7 0H15.100000000000001Q17.3 0 17.3 2.2V12.399999999999999Q17.3 14.6 15.100000000000001 14.6H5.7" stroke="#6c707e" stroke-width="1.1" fill="none"/><circle cx="0.9" cy="14.9" r="2.85" fill="#fff" stroke="#6c707e" stroke-width="1.1"/></g><text x="32.90" y="71.90" font-size="19.3" font-weight="700" stroke="#000" stroke-width="0.35" textLength="111.40">last_update</text><text x="154.40" y="71.90" font-size="19.3" fill="#838899" textLength="92.60">timestamp</text><g transform="translate(8.8,90.65)"><rect x="0.6" y="0.6" width="4.10" height="9.40" fill="#e3edfd"/><path d="M0 9.7V2.2Q0 0 2.2 0H4.7V4.8" stroke="#0f6ffc" stroke-width="1.1" fill="none"/><path d="M4.7 0H15.100000000000001Q17.3 0 17.3 2.2V4.8" stroke="#6c707e" stroke-width="1.1" fill="none"/><circle cx="0.9" cy="14.9" r="2.85" fill="#fff" stroke="#6c707e" stroke-width="1.1"/><circle cx="8.2" cy="9.5" r="2.75" fill="none" stroke="#0f6ffc" stroke-width="1.25"/><path d="M8.2 12.3V18.2M8.2 16.4H11.7" stroke="#0f6ffc" stroke-width="1.25" fill="none"/><circle cx="16.2" cy="9.5" r="2.75" fill="none" stroke="#f9620e" stroke-width="1.25"/><path d="M16.2 12.3V18.2M16.2 16.4H19.7" stroke="#f9620e" stroke-width="1.25" fill="none"/></g><text x="32.90" y="106.05" font-size="19.3" font-weight="700" stroke="#000" stroke-width="0.35" textLength="64.20">film_id</text><text x="180.00" y="106.05" font-size="19.3" fill="#838899" textLength="67.00">smallint</text><g transform="translate(8.8,123.55)"><rect x="0.6" y="0.6" width="4.10" height="9.40" fill="#e3edfd"/><path d="M0 9.7V2.2Q0 0 2.2 0H4.7V4.8" stroke="#0f6ffc" stroke-width="1.1" fill="none"/><path d="M4.7 0H15.100000000000001Q17.3 0 17.3 2.2V4.8" stroke="#6c707e" stroke-width="1.1" fill="none"/><circle cx="0.9" cy="14.9" r="2.85" fill="#fff" stroke="#6c707e" stroke-width="1.1"/><circle cx="8.2" cy="9.5" r="2.75" fill="none" stroke="#0f6ffc" stroke-width="1.25"/><path d="M8.2 12.3V18.2M8.2 16.4H11.7" stroke="#0f6ffc" stroke-width="1.25" fill="none"/><circle cx="16.2" cy="9.5" r="2.75" fill="none" stroke="#f9620e" stroke-width="1.25"/><path d="M16.2 12.3V18.2M16.2 16.4H19.7" stroke="#f9620e" stroke-width="1.25" fill="none"/></g><text x="32.90" y="138.95" font-size="19.3" font-weight="700" stroke="#000" stroke-width="0.35" textLength="112.00">category_id</text><text x="180.00" y="138.95" font-size="19.3" fill="#838899" textLength="67.00">smallint</text></g></g></g>
<rect x="0" y="80" width="1538" height="2" fill="#ebecf0"/><rect x="0" y="82" width="1538" height="52" fill="#f7f8fa"/><rect x="0" y="134" width="1538" height="2" fill="#ebecf0"/><rect x="-3" y="76" width="211" height="6" rx="3" fill="#0074f4"/><rect x="0" y="76" width="4" height="6" rx="2.5" fill="#0074f4"/><path d="M26 28.9H54M26 51.2H54" stroke="#6c707e" stroke-width="1.7" fill="none"/><path d="M32.9 48V33.4M27.9 38.2L32.9 33.2L37.9 38.2M42 38.2L47 33.2L52 38.2" stroke="#0a78f5" stroke-width="1.9" fill="none"/><path d="M47 33.4V48" stroke="#0a78f5" stroke-width="1.9" stroke-dasharray="4.2 2.6" fill="none"/><text x="67.20" y="51.00" font-size="27.4" textLength="76.30" stroke="#000" stroke-width="0.3">public</text><path d="M169.3 33L183 46.8M183 33L169.3 46.8" stroke="#a8adbd" stroke-width="1.7" fill="none"/><circle cx="1500" cy="30" r="2.1" fill="#6c707e"/><circle cx="1500" cy="40" r="2.1" fill="#6c707e"/><circle cx="1500" cy="50" r="2.1" fill="#6c707e"/><rect x="4" y="86" width="44" height="44" rx="7" fill="#dfe1e5"/><rect x="56" y="86" width="44" height="44" rx="7" fill="#dfe1e5"/><rect x="108" y="86" width="44" height="44" rx="7" fill="#dfe1e5"/><rect x="160" y="86" width="44" height="44" rx="7" fill="#dfe1e5"/><rect x="14" y="97" width="7" height="22" fill="#ebecf0"/><path d="M33.6 119.5H16.6Q13.4 119.5 13.4 116.3V100.2Q13.4 97 16.6 97H35.6Q38.8 97 38.8 100.2V104.3M21 97V119.5" stroke="#6c707e" stroke-width="1.85" fill="none"/><circle cx="36.9" cy="110.8" r="4.2" fill="none" stroke="#f9620e" stroke-width="1.9"/><path d="M36.9 115V123.8M36.9 121.1H41.9" stroke="#f9620e" stroke-width="1.9" fill="none"/><rect x="66" y="97" width="7" height="22" fill="#ebecf0"/><rect x="65.5" y="97" width="25.4" height="22.5" rx="3.2" stroke="#6c707e" stroke-width="1.85" fill="none"/><path d="M73.1 97V119.5" stroke="#6c707e" stroke-width="1.85" fill="none"/><circle cx="129" cy="102.2" r="7.1" fill="none" stroke="#a550ef" stroke-width="1.8"/><path d="M129 109.3V121.8M129 115H135.9M129 118.7H135.9" stroke="#a550ef" stroke-width="1.8" fill="none"/><path d="M173 96H193Q196 96 196 99V121.8L187.4 115.8H173Q170 115.8 170 112.8V99Q170 96 173 96Z" fill="#6e6e6e"/><rect x="213.79999999999998" y="88" width="1.6" height="40" fill="#d6d8de"/><rect x="436.2" y="88" width="1.6" height="40" fill="#d6d8de"/><rect x="554.2" y="88" width="1.6" height="40" fill="#d6d8de"/><rect x="724.1" y="88" width="1.6" height="40" fill="#d6d8de"/><circle cx="247.9" cy="107.9" r="13.1" stroke="#6c707e" stroke-width="1.85" fill="none"/><path d="M240 107.9H255.8M247.9 100V115.8" stroke="#6c707e" stroke-width="1.85" fill="none"/><circle cx="300" cy="107.9" r="13.1" stroke="#6c707e" stroke-width="1.85" fill="none"/><path d="M292.1 107.9H307.9" stroke="#6c707e" stroke-width="1.85" fill="none"/><path d="M342.2 99.3H345.5V116H342.2V103.3L338.3 105.8V102.5ZM360.5 99.3H363.8V116H360.5V103.3L356.6 105.8V102.5ZM349.6 105.4H353.1V108.9H349.6ZM349.6 112.5H353.1V116H349.6Z" fill="#6c707e"/><rect x="391.5" y="97.5" width="25.1" height="21" rx="3.2" stroke="#6c707e" stroke-width="1.85" fill="none"/><path d="M397 109.3V102.9H403.1M404.6 113.2H411.3V106.5" stroke="#6c707e" stroke-width="1.85" fill="none"/><path d="M465.4 95.1H474.7V102.4H465.4ZM457.3 113.4H466.7V120.7H457.3ZM473.4 113.4H482.8V120.7H473.4ZM470 102.4V107.6M462 113.4V107.6H478.1V113.4" stroke="#6c707e" stroke-width="1.85" fill="none"/><path d="M508 107.9H524.6M519 101.9L525 107.9L519 113.9M536 97.2H530.5Q528.9 97.2 528.9 98.8V117Q528.9 118.6 530.5 118.6H536" stroke="#6c707e" stroke-width="1.85" fill="none"/><rect x="577.4" y="99.1" width="17" height="19.4" rx="3.6" stroke="#6c707e" stroke-width="1.85" fill="none"/><path d="M582.4 105H589.8M582.4 109H589.8M582.4 112.9H589.8" stroke="#6c707e" stroke-width="1.5" fill="none"/><path d="M581.6 95.4H594.7Q598.7 95.4 598.7 99.4V114.3" stroke="#6c707e" stroke-width="1.85" fill="none"/><path d="M628.2 98.9H651.9M628.2 105H643.9M628.2 111H643.9M628.2 117.2H643.9" stroke="#6c707e" stroke-width="1.85" fill="none"/><path d="M651.1 109V122.6M646.2 109H649.6M652.6 109H656M646.2 122.6H649.6M652.6 122.6H656" stroke="#6c707e" stroke-width="1.5" fill="none"/><path d="M680.9 100.3V115.4Q680.9 118.6 684.1 118.6H699.8M690.5 109.6L703.2 96.9M694.4 96.9H703.3V105.8" stroke="#6c707e" stroke-width="1.85" fill="none"/><path d="M710.1 118.3V125.8H702.3Z" fill="#6c707e"/><path d="M746.8 108.6A11.2 11.2 0 0 1 764.4 99.2M769 107.6A11.2 11.2 0 0 1 751.5 116.8" stroke="#6c707e" stroke-width="2" fill="none"/><path d="M742.2 104.8L746.9 110.4L752.2 105.6M763.8 110.2L769 105.2L773.6 110.8" stroke="#6c707e" stroke-width="2" fill="none"/><path d="M805.05 99.33L807.46 94.84L812.54 94.84L814.95 99.33L820.04 99.17L822.58 103.57L819.90 107.90L822.58 112.23L820.04 116.63L814.95 116.47L812.54 120.96L807.46 120.96L805.05 116.47L799.96 116.63L797.42 112.23L800.10 107.90L797.42 103.57L799.96 99.17Z" stroke="#6c707e" stroke-width="2" fill="none" stroke-linejoin="round"/><circle cx="810" cy="107.9" r="4.5" stroke="#6c707e" stroke-width="2" fill="none"/><path d="M855.6 101.8A6.9 6.9 0 0 1 869.3 101.8C869.3 107.4 861.6 107.3 861.6 113.4" stroke="#6c707e" stroke-width="2.1" fill="none"/><circle cx="861.8" cy="120.2" r="1.9" fill="#6c707e"/><rect x="1510" y="1292" width="28" height="28" fill="#f7f8fa"/>
</svg></body></html>
